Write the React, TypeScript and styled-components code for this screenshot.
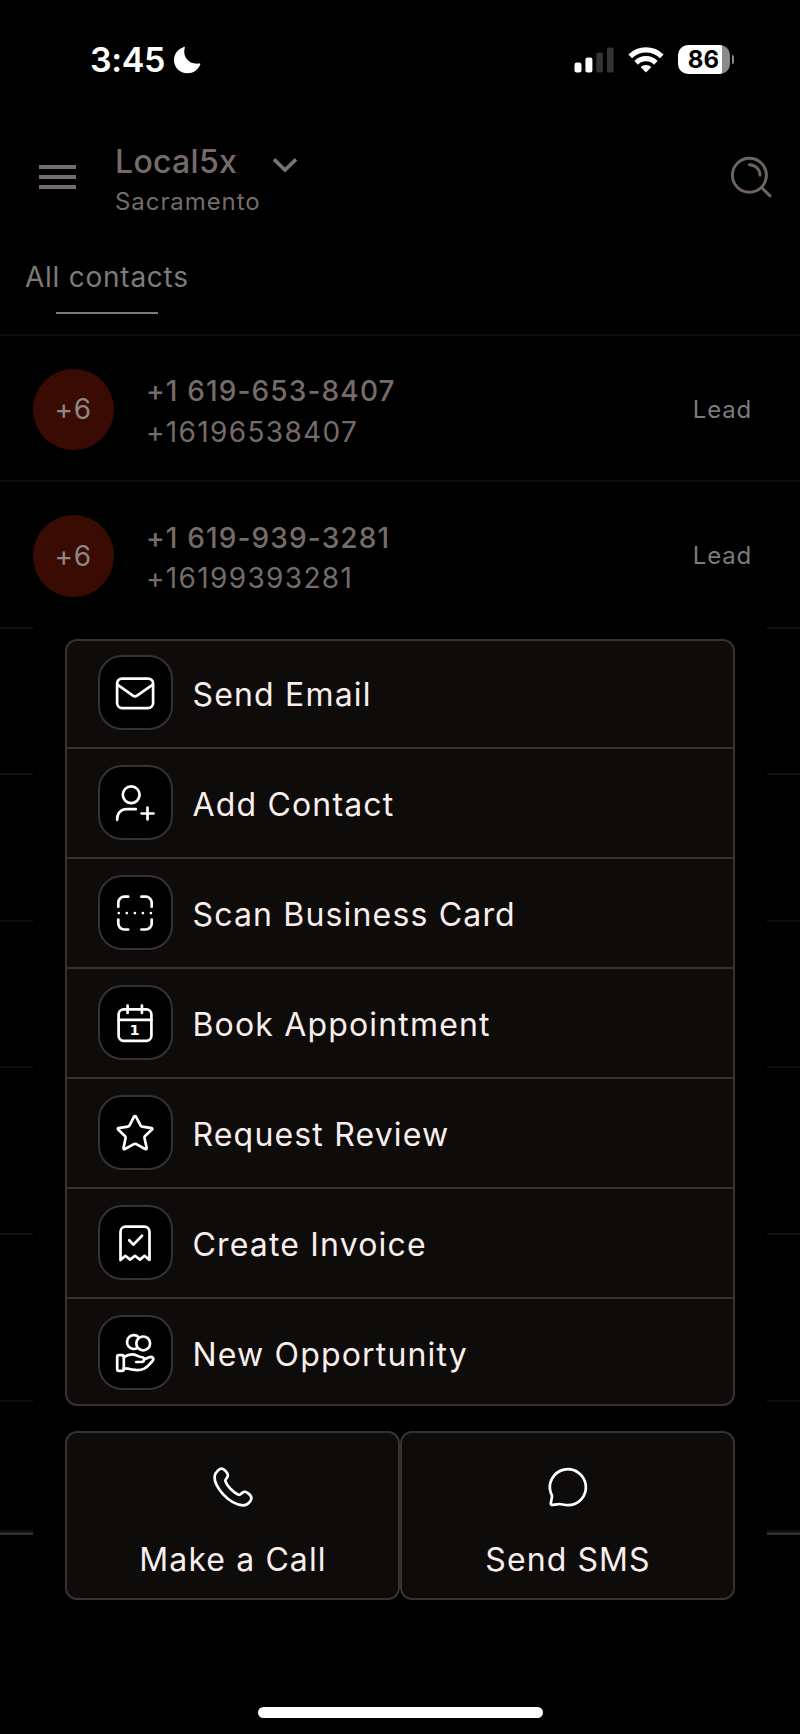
import React from "react";
import styled, { createGlobalStyle } from "styled-components";

const GlobalStyle = createGlobalStyle`
  body {
    margin: 0;
    background: #000;
    font-family: Inter, "Liberation Sans", sans-serif;
    -webkit-font-smoothing: antialiased;
  }
  * { box-sizing: border-box; }
  svg { display: block; flex: none; }
`;

const color = {
  muted: "#756c6a",
  mutedNeutral: "#7b7b7b",
  hairline: "#0e0e0e",
  avatar: "#3a0b03",
  panel: "#0d0c0a",
  border: "#373130",
  label: "#f9eeec",
};

const Screen = styled.main`
  position: relative;
  width: 800px;
  height: 1734px;
  overflow: hidden;
  background: #000;
`;

const StatusBar = styled.div`
  display: flex;
  align-items: center;
  height: 119px;
  padding: 0 66px 0 90px;
`;

const Time = styled.span`
  width: 83px;
  color: #fff;
  font-size: 34px;
  font-weight: 600;
  letter-spacing: -0.4px;
`;

const StatusIcons = styled.div`
  display: flex;
  align-items: center;
  margin-left: auto;
`;

const WifiSlot = styled.div`
  margin: 0 14px 0 14px;
`;

const Battery = styled.div`
  display: flex;
  align-items: center;
  justify-content: center;
  width: 52px;
  height: 29px;
  padding-right: 1px;
  border-radius: 10px;
  background: linear-gradient(to right, #fff 44.5px, #8a8a8a 44.5px);
  color: #000;
  font-size: 24px;
  font-weight: 700;
  letter-spacing: 0.2px;
`;

const BatteryTip = styled.div`
  width: 2.5px;
  height: 9px;
  margin-left: 1.5px;
  border-radius: 0 4px 4px 0;
  background: #8a8a8a;
`;

const Header = styled.header`
  display: flex;
  align-items: center;
  height: 116px;
  padding: 0 28px 0 38.5px;
`;

const MenuIcon = styled.div`
  display: flex;
  flex-direction: column;
  gap: 6px;
  width: 37px;
  > i {
    height: 4px;
    background: #766c6b;
  }
`;

const Account = styled.div`
  margin-left: 38.5px;
  padding-top: 9px;
  color: ${color.muted};
`;

const AccountName = styled.div`
  display: flex;
  align-items: center;
  height: 40px;
  padding-left: 1px;
  font-size: 32px;
  font-weight: 500;
  letter-spacing: 0.3px;
`;

const ChevronSlot = styled.span`
  margin: 7px 0 0 34.5px;
`;

const AccountCity = styled.div`
  padding-left: 1px;
  font-size: 24px;
  line-height: 40px;
  letter-spacing: 0.93px;
`;

const SearchSlot = styled.div`
  margin-left: auto;
`;

const TabBar = styled.nav`
  display: flex;
  height: 100.5px;
  padding: 22px 26px 0 25px;
  border-bottom: 2px solid ${color.hairline};
`;

const Tab = styled.div`
  display: flex;
  flex-direction: column;
  align-items: center;
  color: ${color.mutedNeutral};
  font-size: 28px;
  line-height: 40px;
  letter-spacing: 0.75px;
  &::after {
    content: "";
    width: 102px;
    height: 2px;
    margin-top: 15px;
    background: ${color.mutedNeutral};
  }
`;

const Row = styled.div<{ $height?: number }>`
  display: flex;
  align-items: center;
  height: ${(p) => p.$height ?? 146.5}px;
  padding: 3px 48px 0 32.5px;
  border-bottom: 2px solid ${color.hairline};
`;

const Avatar = styled.div`
  display: flex;
  align-items: center;
  justify-content: center;
  width: 81.5px;
  height: 81.5px;
  border-radius: 50%;
  background: ${color.avatar};
  color: #8b8785;
  font-size: 28px;
  letter-spacing: 0.8px;
`;

const ContactText = styled.div`
  padding: 5px 0 0 32px;
  color: ${color.muted};
  font-size: 28px;
  line-height: 40.5px;
`;

const ContactName = styled.div`
  font-weight: 500;
  letter-spacing: 1.14px;
`;

const ContactPhone = styled.div`
  letter-spacing: 1.34px;
`;

const Tag = styled.span`
  margin-left: auto;
  color: ${color.mutedNeutral};
  font-size: 24px;
  letter-spacing: 0.8px;
`;

const BottomEdge = styled.div`
  height: 132.5px;
  background: linear-gradient(to top, #303030 2px, #121212 3px, #000 6px);
`;

const Sheet = styled.section`
  position: absolute;
  inset: 606px 33px 0;
  padding: 33px 32px 0;
  background: #000;
`;

const Menu = styled.div`
  height: 767px;
  border: 2px solid ${color.border};
  border-radius: 12px;
  background: ${color.panel};
`;

const MenuItem = styled.div`
  display: flex;
  align-items: flex-start;
  height: 110px;
  padding: 16px 0 0 31px;
  border-bottom: 2px solid ${color.border};
  &:first-child {
    height: 108px;
    padding-top: 14px;
  }
  &:last-child {
    border-bottom: 0;
    height: 105px;
  }
`;

const IconTile = styled.div`
  display: flex;
  padding: 11.5px 0 0 11px;
  width: 75px;
  height: 75px;
  border: 2px solid ${color.border};
  border-radius: 24px;
  background: #000;
`;

const MenuLabel = styled.span`
  margin-left: 19.5px;
  color: ${color.label};
  font-size: 32px;
  line-height: 79px;
  letter-spacing: 1.17px;
`;

const Actions = styled.div`
  display: grid;
  grid-template-columns: 1fr 1fr;
  margin-top: 25px;
`;

const ActionButton = styled.div`
  display: flex;
  flex-direction: column;
  align-items: center;
  height: 168.5px;
  padding: 29.5px 0 0 1px;
  border: 2px solid ${color.border};
  border-radius: 12px;
  background: ${color.panel};
  color: ${color.label};
  font-size: 32px;
  line-height: 50px;
  letter-spacing: 1.1px;
  > svg { margin: 0 1px 24.5px 0; }
`;

const HomeIndicator = styled.div`
  position: absolute;
  left: 258px;
  top: 1707px;
  width: 285px;
  height: 11px;
  border-radius: 6px;
  background: #fff;
`;

const Glyph = ({ children, weight = 2.7 }: { children: React.ReactNode; weight?: number }) => (
  <svg width="48" height="48" viewBox="0 0 48 48" fill="none" stroke="#fff" strokeWidth={weight} strokeLinecap="round" strokeLinejoin="round">
    {children}
  </svg>
);

const menu: { label: string; icon: React.ReactNode }[] = [
  {
    label: "Send Email",
    icon: (
      <>
        <rect x="6.1" y="9.6" width="36" height="29.5" rx="5" />
        <path d="M6.4 15.6L22.3 26.8Q24 28.1 25.7 26.8L41.8 15.6" />
      </>
    ),
  },
  {
    label: "Add Contact",
    icon: (
      <>
        <circle cx="20.2" cy="15.8" r="8.4" />
        <path d="M6.2 40.8V39.4C6.2 34.2 10.2 30.2 15.4 30.2H24.8" />
        <path d="M36.5 28.6V40.4M30.6 34.5H42.4" />
      </>
    ),
  },
  {
    label: "Scan Business Card",
    icon: (
      <>
        <path d="M7.3 17.7V13.7A6 6 0 0 1 13.3 7.7H17.2M30.4 7.7H34.7A6 6 0 0 1 40.7 13.7V17.7M40.7 30.6V34.5A6 6 0 0 1 34.7 40.5H30.4M17.2 40.5H13.3A6 6 0 0 1 7.3 34.5V30.6" />
        <path d="M7.8 24.1H7.81M15.8 24.1H15.81M23.9 24.1H23.91M31.9 24.1H31.91M39.9 24.1H39.91" />
      </>
    ),
  },
  {
    label: "Book Appointment",
    icon: (
      <>
        <rect x="7.6" y="10.4" width="32.8" height="31.4" rx="5" />
        <path d="M7.6 20.9H40.4M16.6 6.6V14M30.9 6.6V14" />
        <text x="23.7" y="36.2" textAnchor="middle" fill="#fff" stroke="none" fontFamily="DejaVu Sans" fontWeight="700" fontSize="14.6">1</text>
      </>
    ),
  },
  {
    label: "Request Review",
    icon: (
      <path d="M22.9 7.9Q24 6.5 25.1 7.9L29.4 16.2Q29.9 17.4 31.2 17.6L40.6 19.1Q41.8 19.6 41 20.6L34.1 27Q33.3 27.9 33.5 29L35.7 39Q35.7 40.7 34.2 40L25.3 35.1Q24 34.5 22.8 35.1L14 40Q12.3 40.7 12.5 39L14.6 29Q14.8 27.9 13.9 27L7.1 20.6Q6.3 19.6 7.6 19.1L16.8 17.6Q18.1 17.4 18.7 16.2Z" />
    ),
  },
  {
    label: "Create Invoice",
    icon: (
      <>
        <path d="M9.5 41V12.7A5 5 0 0 1 14.5 7.7H33.5A5 5 0 0 1 38.5 12.7V41L33.6 36.8L28.9 40.6L24 36.8L19.1 40.6L14.4 36.8Z" />
        <path d="M18.2 21.2L22.4 25.6L31 16.8" />
      </>
    ),
  },
  {
    label: "New Opportunity",
    icon: (
      <>
        <circle cx="32.2" cy="14.4" r="6.9" />
        <path d="M27.7 8.1A6.9 6.9 0 1 0 26.3 19.1" />
        <rect x="6.2" y="26.2" width="6.6" height="15.6" rx="1.6" />
        <path d="M12.8 28.2C16 26 19 25.2 22 25.4C25.6 25.8 27.5 27.8 30.2 28C34.4 28.2 33.8 33 30 33H25.2M33 30.6L38.2 28.3C41.4 27 43.4 29.6 41.6 31.8C39 35 36 38 33.2 39.6C30 41.3 26 41.4 22 40.7C19 40 16 39.4 12.8 39.4" />
      </>
    ),
  },
];

const contacts = [
  { name: "+1 619-653-8407", phone: "+16196538407" },
  { name: "+1 619-939-3281", phone: "+16199393281" },
];

export default function App() {
  return (
    <Screen>
      <GlobalStyle />
      <StatusBar>
        <Time>3:45</Time>
        <svg width="28" height="28" viewBox="0 0 28 28" fill="#fff">
          <path d="M10.8 1C11.6 .6 12 1.1 11.7 2C9.4 10.5 15.5 18.8 26 17.6C27.2 17.4 27.6 17.9 27.2 18.8C24.9 24 20.3 27.3 14.4 27.3C6.7 27.3 1 21.5 1 14C1 8 4.9 3 10.8 1Z" />
        </svg>
        <StatusIcons>
          <svg width="40" height="26" viewBox="0 0 40 26">
            <rect x="0.5" y="15.5" width="7" height="10" rx="2.2" fill="#fff" />
            <rect x="11.4" y="10.5" width="7" height="15" rx="2.2" fill="#fff" />
            <rect x="22.3" y="5.6" width="6.6" height="20" rx="2.2" fill="#333" />
            <rect x="33" y="0.4" width="6.6" height="25.2" rx="2.2" fill="#333" />
          </svg>
          <WifiSlot>
            <svg width="36" height="26" viewBox="0 0 36 26" fill="none" stroke="#fff" strokeWidth="5.2">
              <path d="M2.2 9.3A22.4 22.4 0 0 1 33.8 9.3" />
              <path d="M8.2 15.8A13.8 13.8 0 0 1 27.8 15.8" />
              <path d="M18 25.4L12.6 20.1A7.8 7.8 0 0 1 23.4 20.1Z" fill="#fff" stroke="none" />
            </svg>
          </WifiSlot>
          <Battery>86</Battery>
          <BatteryTip />
        </StatusIcons>
      </StatusBar>

      <Header>
        <MenuIcon><i /><i /><i /></MenuIcon>
        <Account>
          <AccountName>
            Local5x
            <ChevronSlot>
              <svg width="26" height="16" viewBox="0 0 26 16" fill="none" stroke="#777" strokeWidth="3.6">
                <path d="M2 2.4L13 13L24 2.4" />
              </svg>
            </ChevronSlot>
          </AccountName>
          <AccountCity>Sacramento</AccountCity>
        </Account>
        <SearchSlot>
          <svg width="42" height="42" viewBox="0 0 42 42" fill="none" stroke="#70645f" strokeWidth="2.9" strokeLinecap="round">
            <circle cx="19.4" cy="19.3" r="17" />
            <path d="M19.4 8.7A10.6 10.6 0 0 1 30 19.3M31.6 31.5L40 39.9" />
          </svg>
        </SearchSlot>
      </Header>

      <TabBar>
        <Tab>All contacts</Tab>
      </TabBar>

      {contacts.map((c) => (
        <Row key={c.phone}>
          <Avatar>+6</Avatar>
          <ContactText>
            <ContactName>{c.name}</ContactName>
            <ContactPhone>{c.phone}</ContactPhone>
          </ContactText>
          <Tag>Lead</Tag>
        </Row>
      ))}
      <Row />
      <Row />
      <Row />
      <Row $height={167} />
      <Row $height={167} />
      <BottomEdge />

      <Sheet>
        <Menu>
          {menu.map((m) => (
            <MenuItem key={m.label}>
              <IconTile><Glyph>{m.icon}</Glyph></IconTile>
              <MenuLabel>{m.label}</MenuLabel>
            </MenuItem>
          ))}
        </Menu>
        <Actions>
          <ActionButton>
            <Glyph>
              <path d="M5.6 13.4C5.8 10.8 7.2 9 9 7.4C11.2 5.2 13.4 5 15.5 7C17.4 8.8 19 10.6 18.9 12.6C18.7 15 16 15.8 16.3 17.9C17 20.4 18.8 23.2 21.4 25.8C24 28.5 26.6 30.6 29.4 31.7C31.9 32.4 32.4 29.3 35 28.8C37.4 28.5 39.2 30 41 32C43 34.3 43 36.4 40.8 38.8C38.8 41.2 37 42.6 34 42.4C26.8 41.6 20 37.6 14.2 31.3C8.8 25.4 5.2 18.6 5.6 13.4Z" />
            </Glyph>
            Make a Call
          </ActionButton>
          <ActionButton>
            <Glyph>
              <path d="M23.7 42.2A18 18 0 1 0 6.9 30.2C7.6 31.4 8.3 31.8 8 33.6L6.8 40.2Q6.8 42.2 8.8 41.9L14.6 41.1C17.2 40.6 19.4 42.2 23.7 42.2Z" />
            </Glyph>
            Send SMS
          </ActionButton>
        </Actions>
      </Sheet>
      <HomeIndicator />
    </Screen>
  );
}
